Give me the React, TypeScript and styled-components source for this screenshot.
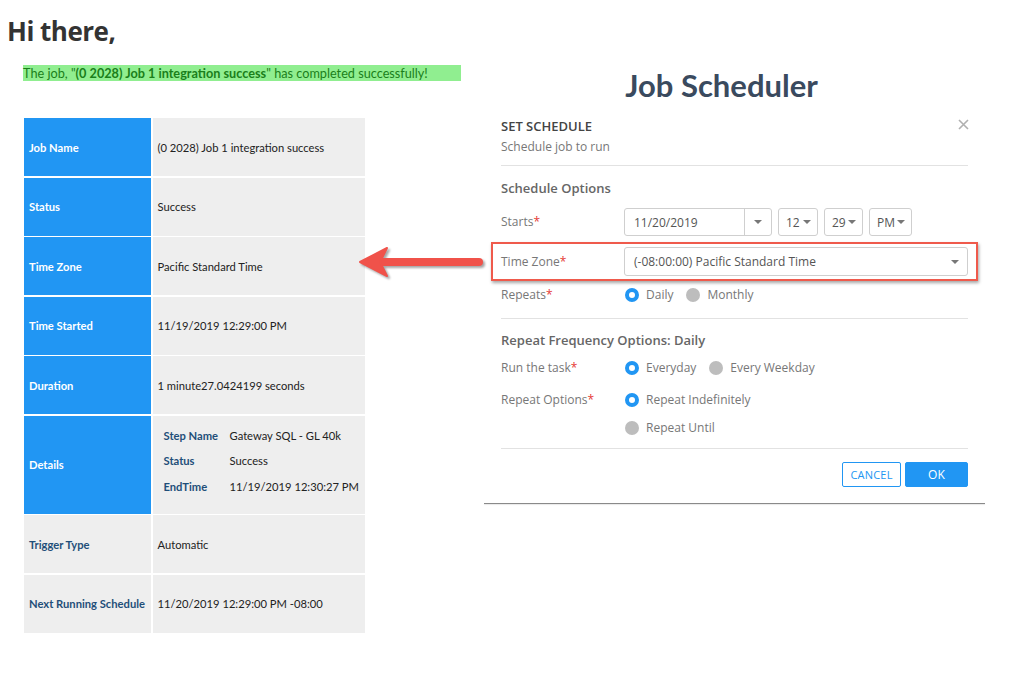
import React from "react";
import styled, { createGlobalStyle } from "styled-components";

const GlobalStyle = createGlobalStyle`
  html, body {
    margin: 0;
    padding: 0;
    background: #ffffff;
  }
  body {
    font-family: "Open Sans", "Liberation Sans", sans-serif;
  }
  * {
    box-sizing: border-box;
  }
`;

const Page = styled.div`
  padding: 15px 0 0 7px;
  width: 1024px;
`;

const Greeting = styled.h1`
  margin: 0;
  font-family: "Open Sans", sans-serif;
  font-size: 26px;
  line-height: 32px;
  font-weight: 700;
  color: #333333;
  letter-spacing: -0.5px;
`;

const Main = styled.div`
  position: relative;
  display: flex;
  align-items: flex-start;
  margin-top: 18px;
  margin-left: 16px;
`;

const LeftCol = styled.div`
  width: 461px;
  display: flex;
  flex-direction: column;
`;

const Banner = styled.div`
  width: 438px;
  height: 16px;
  background: #90ee90;
  color: #1a7f1a;
  font-family: Lato, sans-serif;
  font-size: 12.7px;
  line-height: 16px;
  white-space: nowrap;
  b {
    font-weight: 700;
  }
`;

const InfoTable = styled.div`
  margin-top: 37px;
  margin-left: 1px;
  display: grid;
  grid-template-columns: 127px 212px;
  column-gap: 1.5px;
  row-gap: 1.5px;
  font-family: Lato, sans-serif;
  font-size: 11.2px;
`;

const LabelCell = styled.div<{ $plain?: boolean; $tall?: boolean }>`
  height: ${(p) => (p.$tall ? "98px" : "58px")};
  display: flex;
  align-items: center;
  padding-left: 5px;
  font-weight: 700;
  background: ${(p) => (p.$plain ? "#eeeeee" : "#2196f3")};
  color: ${(p) => (p.$plain ? "#1f4e79" : "#ffffff")};
  white-space: nowrap;
`;

const ValueCell = styled.div`
  display: flex;
  align-items: center;
  padding-left: 5px;
  background: #eeeeee;
  color: #222222;
`;

const DetailList = styled.div`
  display: grid;
  grid-template-columns: 66px auto;
  row-gap: 12.5px;
  padding-left: 6px;
  padding-bottom: 8px;
`;

const DetailKey = styled.span`
  font-weight: 700;
  color: #1f4e79;
`;

const DetailValue = styled.span`
  color: #222222;
`;

const RightCol = styled.div`
  width: 501px;
  display: flex;
  flex-direction: column;
`;

const Title = styled.h2`
  margin: 0;
  padding-right: 26px;
  text-align: center;
  font-family: Lato, sans-serif;
  font-size: 31px;
  line-height: 40px;
  font-weight: 700;
  color: #3a4a5e;
`;

const Dialog = styled.div`
  position: relative;
  padding: 12px 17px 16px 17px;
  font-size: 12px;
  color: #777777;
`;

const BottomRule = styled.div`
  height: 1px;
  background: #8a8a8a;
  box-shadow: 0 1px 1px rgba(0, 0, 0, 0.1);
`;

const DialogTitle = styled.div`
  font-size: 13px;
  line-height: 18px;
  color: #444444;
  font-weight: 600;
`;

const DialogSub = styled.div`
  margin-top: 4px;
  font-size: 12px;
  line-height: 16px;
  color: #777777;
`;

const Close = styled.svg`
  position: absolute;
  top: 14px;
  right: 16px;
`;

const Divider = styled.div<{ $top: number }>`
  margin-top: ${(p) => p.$top}px;
  height: 1px;
  background: #e2e2e2;
`;

const SectionTitle = styled.div<{ $top: number }>`
  margin-top: ${(p) => p.$top}px;
  font-size: 13px;
  line-height: 18px;
  font-weight: 600;
  color: #666666;
`;

const FormRow = styled.div<{ $top: number }>`
  margin-top: ${(p) => p.$top}px;
  display: flex;
  align-items: center;
  min-height: 20px;
`;

const Highlight = styled.div`
  margin: 6px -10px 0 -10px;
  padding: 3px 8px;
  border: 2px solid #ef5a4c;
  box-shadow: 1px 2px 3px rgba(0, 0, 0, 0.35);
  display: flex;
  align-items: center;
`;

const Label = styled.div`
  width: 123px;
  flex: none;
  color: #777777;
  font-size: 12px;
  line-height: 20px;
  span {
    color: #e53935;
  }
`;

const Controls = styled.div`
  display: flex;
  align-items: center;
  gap: 6px;
`;

const Box = styled.div<{ $w: number; $h?: number }>`
  width: ${(p) => p.$w}px;
  height: ${(p) => p.$h ?? 28}px;
  border: 1px solid #cfcfcf;
  border-radius: 3px;
  display: flex;
  align-items: center;
  color: #555555;
  font-size: 12px;
  background: #ffffff;
`;

const BoxText = styled.div<{ $pad?: number }>`
  flex: 1;
  padding-left: ${(p) => p.$pad ?? 9}px;
  white-space: nowrap;
`;

const CaretCell = styled.div`
  width: 27px;
  align-self: stretch;
  border-left: 1px solid #cfcfcf;
  display: flex;
  align-items: center;
  justify-content: center;
`;

const SmallCaret = styled.div<{ $right?: number }>`
  width: 0;
  height: 0;
  border-left: 4px solid transparent;
  border-right: 4px solid transparent;
  border-top: 4px solid #777777;
  margin-right: ${(p) => p.$right ?? 6}px;
`;

const Options = styled.div`
  display: flex;
  align-items: center;
  gap: 12px;
`;

const Option = styled.div`
  display: inline-flex;
  align-items: center;
  gap: 7px;
  color: #777777;
  font-size: 12px;
  line-height: 20px;
`;

const RadioDot = styled.span<{ $on?: boolean }>`
  width: 14px;
  height: 14px;
  border-radius: 50%;
  margin-left: 1px;
  background: ${(p) => (p.$on ? "#ffffff" : "#bdbdbd")};
  border: ${(p) => (p.$on ? "4px solid #2196f3" : "none")};
`;

const Footer = styled.div`
  margin-top: 13px;
  display: flex;
  justify-content: flex-end;
  gap: 4px;
`;

const Button = styled.button<{ $primary?: boolean }>`
  height: 25px;
  width: ${(p) => (p.$primary ? "63px" : "59px")};
  padding: 0;
  border: 1px solid #2196f3;
  border-radius: 2px;
  background: ${(p) => (p.$primary ? "#2196f3" : "#ffffff")};
  color: ${(p) => (p.$primary ? "#ffffff" : "#2196f3")};
  font-family: "Open Sans", sans-serif;
  font-size: ${(p) => (p.$primary ? "12px" : "11px")};
  letter-spacing: 0.2px;
`;

const Arrow = styled.svg`
  position: absolute;
  left: 332px;
  top: 179px;
  overflow: visible;
  filter: drop-shadow(2px 2px 1px rgba(0, 0, 0, 0.35));
`;

type Row = { label: string; value: string; plain?: boolean };

const rows: Row[] = [
  { label: "Job Name", value: "(0 2028) Job 1 integration success" },
  { label: "Status", value: "Success" },
  { label: "Time Zone", value: "Pacific Standard Time" },
  { label: "Time Started", value: "11/19/2019 12:29:00 PM" },
  { label: "Duration", value: "1 minute27.0424199 seconds" },
];

const tailRows: Row[] = [
  { label: "Trigger Type", value: "Automatic", plain: true },
  { label: "Next Running Schedule", value: "11/20/2019 12:29:00 PM -08:00", plain: true },
];

const details = [
  ["Step Name", "Gateway SQL - GL 40k"],
  ["Status", "Success"],
  ["EndTime", "11/19/2019 12:30:27 PM"],
];

function Radio({ on, children }: { on?: boolean; children: React.ReactNode }) {
  return (
    <Option>
      <RadioDot $on={on} />
      {children}
    </Option>
  );
}

export default function App() {
  return (
    <>
      <GlobalStyle />
      <Page>
        <Greeting>Hi there,</Greeting>
        <Main>
          <LeftCol>
            <Banner>
              The job, "<b>(0 2028) Job 1 integration success</b>" has completed successfully!
            </Banner>
            <InfoTable>
              {rows.map((r) => (
                <React.Fragment key={r.label}>
                  <LabelCell>{r.label}</LabelCell>
                  <ValueCell>{r.value}</ValueCell>
                </React.Fragment>
              ))}
              <LabelCell $tall>Details</LabelCell>
              <ValueCell>
                <DetailList>
                  {details.map(([k, v]) => (
                    <React.Fragment key={k}>
                      <DetailKey>{k}</DetailKey>
                      <DetailValue>{v}</DetailValue>
                    </React.Fragment>
                  ))}
                </DetailList>
              </ValueCell>
              {tailRows.map((r) => (
                <React.Fragment key={r.label}>
                  <LabelCell $plain>{r.label}</LabelCell>
                  <ValueCell>{r.value}</ValueCell>
                </React.Fragment>
              ))}
            </InfoTable>
          </LeftCol>

          <RightCol>
            <Title>Job Scheduler</Title>
            <Dialog>
              <DialogTitle>SET SCHEDULE</DialogTitle>
              <DialogSub>Schedule job to run</DialogSub>
              <Close width="11" height="11" viewBox="0 0 11 11">
                <path d="M1 1 L10 10 M10 1 L1 10" stroke="#b0b0b0" strokeWidth="1.6" />
              </Close>
              <Divider $top={10} />

              <SectionTitle $top={13}>Schedule Options</SectionTitle>
              <FormRow $top={11}>
                <Label>
                  Starts<span>*</span>
                </Label>
                <Controls>
                  <Box $w={148}>
                    <BoxText>11/20/2019</BoxText>
                    <CaretCell>
                      <SmallCaret $right={0} />
                    </CaretCell>
                  </Box>
                  <Box $w={40}>
                    <BoxText $pad={7}>12</BoxText>
                    <SmallCaret />
                  </Box>
                  <Box $w={39}>
                    <BoxText $pad={7}>29</BoxText>
                    <SmallCaret />
                  </Box>
                  <Box $w={43}>
                    <BoxText $pad={7}>PM</BoxText>
                    <SmallCaret />
                  </Box>
                </Controls>
              </FormRow>

              <Highlight>
                <Label>
                  Time Zone<span>*</span>
                </Label>
                <Box $w={344} $h={29}>
                  <BoxText>(-08:00:00) Pacific Standard Time</BoxText>
                  <SmallCaret $right={8} />
                </Box>
              </Highlight>

              <FormRow $top={4}>
                <Label>
                  Repeats<span>*</span>
                </Label>
                <Options>
                  <Radio on>Daily</Radio>
                  <Radio>Monthly</Radio>
                </Options>
              </FormRow>

              <Divider $top={13} />
              <SectionTitle $top={12}>Repeat Frequency Options: Daily</SectionTitle>

              <FormRow $top={9}>
                <Label>
                  Run the task<span>*</span>
                </Label>
                <Options>
                  <Radio on>Everyday</Radio>
                  <Radio>Every Weekday</Radio>
                </Options>
              </FormRow>

              <FormRow $top={12}>
                <Label>
                  Repeat Options<span>*</span>
                </Label>
                <Options>
                  <Radio on>Repeat Indefinitely</Radio>
                </Options>
              </FormRow>

              <FormRow $top={8}>
                <Label />
                <Options>
                  <Radio>Repeat Until</Radio>
                </Options>
              </FormRow>

              <Divider $top={10} />
              <Footer>
                <Button>CANCEL</Button>
                <Button $primary>OK</Button>
              </Footer>
            </Dialog>
            <BottomRule />
          </RightCol>

          <Arrow width="130" height="36" viewBox="0 0 130 36">
            <line x1="26" y1="18" x2="124" y2="18" stroke="#f0524a" strokeWidth="8" strokeLinecap="round" />
            <path d="M5 18 L32 4 L25 18 L32 32 Z" fill="#f0524a" stroke="#f0524a" strokeWidth="2" strokeLinejoin="round" />
          </Arrow>
        </Main>
      </Page>
    </>
  );
}
